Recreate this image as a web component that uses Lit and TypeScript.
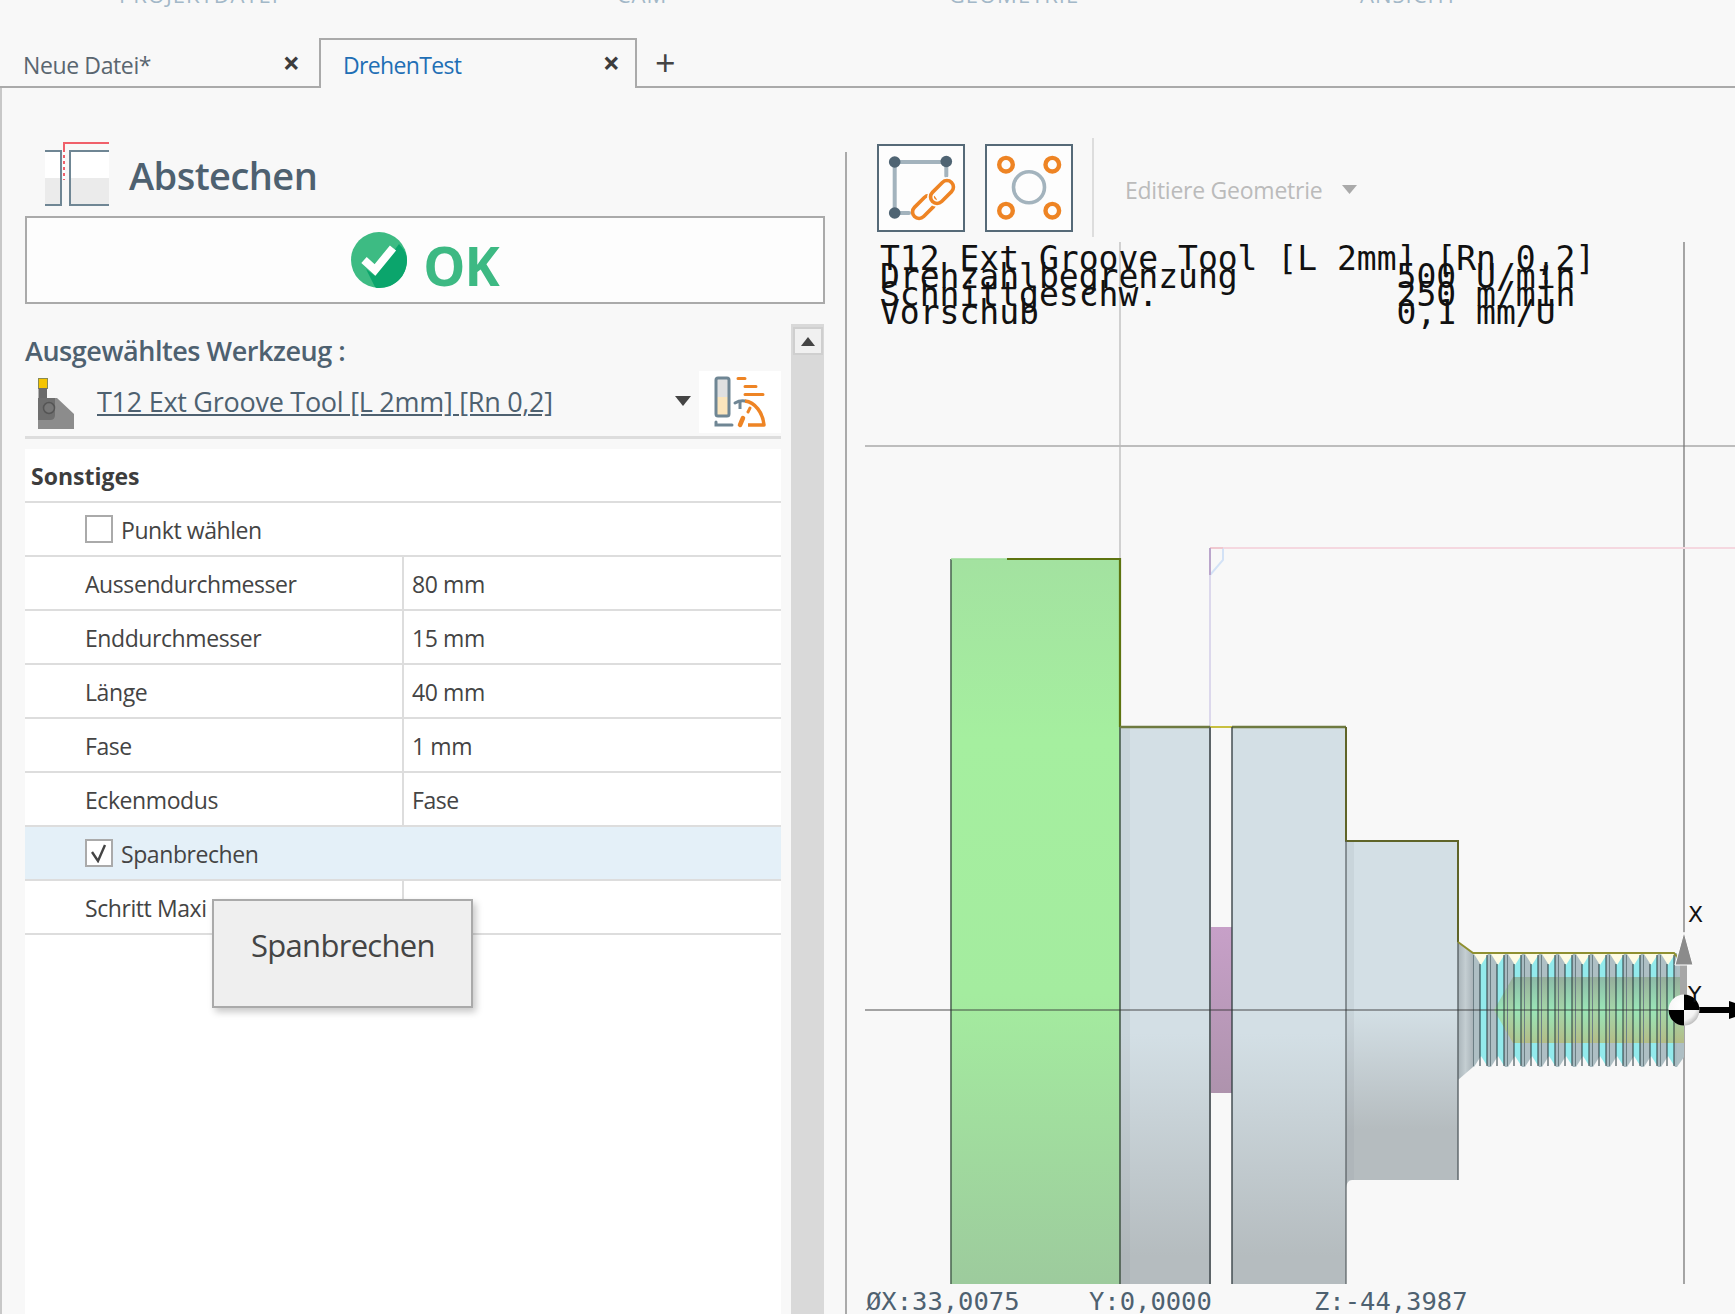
import { LitElement, html, css, svg } from "lit";
import { customElement } from "lit/decorators.js";

const rows = [
  { name: "Aussendurchmesser", value: "80 mm" },
  { name: "Enddurchmesser", value: "15 mm" },
  { name: "Länge", value: "40 mm" },
  { name: "Fase", value: "1 mm" },
  { name: "Eckenmodus", value: "Fase" },
];

const threadParts = () => {
  const out = [];
  for (let i = 0; i < 12; i++) {
    const x = 1473 + i * 17;
    out.push(svg`
      <rect x=${x} y="953" width="7" height="114" fill="#aebfc4"/>
      <rect x=${x + 7} y="953" width="7" height="114" fill="#93eaec"/>
      <rect x=${x + 14} y="953" width="3" height="114" fill="#a8bcc2"/>
      <path d="M${x + 1} 954 L${x + 8} 965 L${x + 15} 954 Z" fill="#fdfbe4"/>
      <path d="M${x + 1} 1067 L${x + 8} 1056 L${x + 15} 1067 Z" fill="#f8f8f8"/>
    `);
  }
  return out;
};

const threadLines = () => {
  const out = [];
  for (let i = 0; i < 12; i++) {
    const x = 1473 + i * 17;
    out.push(svg`
      <path d="M${x + 0.5} 955 V1066" stroke="#6b7e84" stroke-width="1"/>
      <path d="M${x + 7} 964 V1066" stroke="#1f3338" stroke-width="1"/>
      <path d="M${x + 14} 955 V1066" stroke="#26363a" stroke-width="1"/>
    `);
  }
  return out;
};

@customElement("app-root")
export class AppRoot extends LitElement {
  static styles = css`
    :host { display: block; width: 1735px; height: 1314px; overflow: hidden; background: #f8f8f8; font-family: "Open Sans", "Noto Sans", sans-serif; color: #444; }
    * { box-sizing: border-box; }
    .menu { height: 38px; overflow: hidden; display: grid; grid-template-columns: 398px 488px 256px 534px; }
    .menu span { text-align: center; font-size: 22px; line-height: 22px; margin-top: -17px; color: #a3b8c8; letter-spacing: 1px; }
    .tabs { height: 50px; display: flex; border-bottom: 2px solid #aaa; }
    .tab { width: 319px; height: 50px; display: flex; align-items: center; justify-content: space-between; padding: 4px 19px 0 23px; font-size: 23px; letter-spacing: -0.38px; color: #5a6670; }
    .tab.active { width: 318px; border: 2px solid #aaa; border-bottom: none; background: #f8f8f8; color: #1f6fb5; padding: 2px 15px 0 22px; letter-spacing: -0.65px; }
    .close { font-size: 30px; font-weight: 700; color: #3c3c3c; line-height: 1; margin-top: -4px; letter-spacing: 0; }
    .plus { font-size: 36px; line-height: 1; color: #444; margin: 0 0 0 18px; align-self: center; padding-top: 1px; font-weight: 400; }
    .main { display: flex; height: 1226px; }
    .left { width: 845px; border-left: 2px solid #c8c8c8; padding-left: 23px; overflow: hidden; display: flex; flex-direction: column; }
    .head { height: 128px; padding: 54px 0 0 20px; display: flex; align-items: flex-start; gap: 20px; }
    .title { font-size: 38px; font-weight: 600; letter-spacing: -0.55px; color: #4e6170; line-height: 44px; margin-top: 11px; }
    .ok { width: 800px; height: 88px; background: #fdfdfd; border: 2px solid #aaa; display: flex; align-items: center; justify-content: center; gap: 16px; }
    .ok-text { font-size: 53px; font-weight: 700; color: #3db983; line-height: 56px; margin-top: 11px; letter-spacing: -1px; }
    .ok svg { margin-top: -1px; }
    .body { flex: 1; min-height: 0; margin-top: 20px; display: flex; gap: 10px; width: 799px; }
    .content { width: 756px; display: flex; flex-direction: column; }
    .tool-label { height: 46px; font-size: 27px; font-weight: 600; letter-spacing: -0.45px; color: #4e6170; display: flex; align-items: center; padding-top: 6px; }
    .tool-row { height: 69px; border-bottom: 3px solid #ddd; display: flex; align-items: center; padding-bottom: 3px; }
    .tool-icon { margin-left: 13px; margin-top: 5px; }
    .tool-link { margin-left: 23px; font-size: 27px; letter-spacing: -0.27px; color: #4e6170; text-decoration: underline; flex: 1; }
    .drop { margin-right: 8px; margin-top: -2px; }
    .tool-btn { width: 82px; height: 62px; background: #fff; display: block; }
    .panel { position: relative; margin-top: 10px; background: #fff; flex: 1; }
    .row { height: 54px; border-bottom: 2px solid #ddd; display: flex; align-items: center; font-size: 23px; letter-spacing: -0.42px; color: #444; }
    .label { padding-top: 2px; }
    .row.group { font-weight: 700; color: #3d3d3d; padding-left: 6px; letter-spacing: 0; }
    .row.check { padding-left: 60px; }
    .row.sel { background: #e4f0f8; }
    .box { width: 28px; height: 28px; border: 2px solid #aaa; background: #fff; margin-right: 8px; display: flex; align-items: center; justify-content: center; }
    .name { width: 379px; height: 100%; border-right: 2px solid #ddd; padding-left: 60px; display: flex; align-items: center; white-space: nowrap; overflow: hidden; }
    .value { padding-left: 8px; }
    .tip { position: absolute; left: 187px; top: 450px; width: 261px; height: 109px; background: #efefef; border: 2px solid #aaa; box-shadow: 3px 4px 7px rgba(0,0,0,.22); font-size: 31px; letter-spacing: -0.7px; color: #444; padding: 23px 0 0 37px; }
    .scroll { width: 33px; background: #d9d9d9; padding: 3px 1px 0 2px; }
    .scroll-up { height: 28px; background: #f0f0f0; border: 2px solid #cfcfcf; display: flex; align-items: center; justify-content: center; }
    .divider { width: 2px; margin-top: 64px; background: #aaa; }
    .right { flex: 1; min-width: 0; display: flex; flex-direction: column; }
    .toolbar { height: 152px; padding: 56px 0 0 30px; display: flex; align-items: flex-start; }
    .tbtn { width: 88px; height: 88px; border: 2px solid #566a78; background: #fdfdfd; margin-right: 20px; display: block; }
    .sep { width: 2px; height: 99px; margin-top: -6px; background: #ddd; margin-left: -1px; }
    .edit { margin-left: 31px; display: flex; align-items: center; gap: 20px; font-size: 23px; letter-spacing: -0.25px; color: #bbb; height: 88px; padding-top: 3px; }
    .view { position: relative; flex: 1; min-height: 0; }
    .view svg { position: absolute; left: 0; top: 0; }
    .info { position: absolute; left: 33px; top: 10px; margin: 0; white-space: pre; font-family: "DejaVu Sans Mono", monospace; font-size: 33px; line-height: 18px; color: #111; }
    .status { height: 29px; display: flex; font-family: "DejaVu Sans Mono", monospace; font-size: 25.5px; line-height: 33px; color: #4e6170; padding-left: 19px; white-space: pre; }
    .status span:nth-child(1) { width: 223px; }
    .status span:nth-child(2) { width: 225px; }
  `;

  render() {
    return html`
      <div class="menu"><span>PROJEKTDATEI</span><span>CAM</span><span>GEOMETRIE</span><span>ANSICHT</span></div>
      <div class="tabs">
        <div class="tab"><span>Neue Datei*</span><span class="close">×</span></div>
        <div class="tab active"><span>DrehenTest</span><span class="close">×</span></div>
        <div class="plus">+</div>
      </div>
      <div class="main">
        <div class="left">
          <div class="head">
            ${this.headIcon()}
            <div class="title">Abstechen</div>
          </div>
          <div class="ok">${this.checkIcon()}<span class="ok-text">OK</span></div>
          <div class="body">
            <div class="content">
              <div class="tool-label">Ausgewähltes Werkzeug :</div>
              <div class="tool-row">
                ${this.toolIcon()}
                <span class="tool-link">T12 Ext Groove Tool [L 2mm] [Rn 0,2]</span>
                <svg class="drop" width="16" height="10" viewBox="0 0 16 10"><path d="M0 0H16L8 10Z" fill="#444"/></svg>
                ${this.toolBtn()}
              </div>
              <div class="panel">
                <div class="row group"><span class="label">Sonstiges</span></div>
                <div class="row check"><span class="box"></span><span class="label">Punkt wählen</span></div>
                ${rows.map((r) => html`<div class="row"><div class="name"><span class="label">${r.name}</span></div><div class="value label">${r.value}</div></div>`)}
                <div class="row check sel"><span class="box"><svg width="20" height="20" viewBox="0 0 20 20"><path d="M3 9L9 18L16 2" fill="none" stroke="#444" stroke-width="2.4"/></svg></span><span class="label">Spanbrechen</span></div>
                <div class="row"><div class="name"><span class="label">Schritt Maxi</span></div><div class="value"></div></div>
                <div class="tip">Spanbrechen</div>
              </div>
            </div>
            <div class="scroll"><div class="scroll-up"><svg width="14" height="9" viewBox="0 0 14 9"><path d="M7 0L14 9H0Z" fill="#444"/></svg></div></div>
          </div>
        </div>
        <div class="divider"></div>
        <div class="right">
          <div class="toolbar">
            ${this.linkBtn()}
            ${this.circleBtn()}
            <div class="sep"></div>
            <div class="edit">Editiere Geometrie <svg width="15" height="9" viewBox="0 0 15 9"><path d="M0 0H15L7.5 9Z" fill="#aaa"/></svg></div>
          </div>
          <div class="view">
            ${this.canvas()}
            <pre class="info">T12 Ext Groove Tool [L 2mm] [Rn 0,2]
Drehzahlbegrenzung        500 U/min
Schnittgeschw.            250 m/min
Vorschub                  0,1 mm/U</pre>
          </div>
          <div class="status"><span>ØX:33,0075</span><span>Y:0,0000</span><span>Z:-44,3987</span></div>
        </div>
      </div>
    `;
  }

  headIcon() {
    return html`<svg width="64" height="64" viewBox="45 142 64 64" style="flex:none">
      <rect x="45" y="151" width="16" height="27" fill="#fff"/><rect x="45" y="178" width="16" height="27" fill="#ebebeb"/>
      <rect x="70" y="151" width="39" height="27" fill="#fff"/><rect x="70" y="178" width="39" height="27" fill="#ebebeb"/>
      <path d="M45 151H61V205H45M109 151H70V205H109" fill="none" stroke="#6f8694" stroke-width="2"/>
      <path d="M64 180V143H109" fill="none" stroke="#f0606a" stroke-width="2"/>
      <path d="M64 152V181" stroke="#fff" stroke-width="2" stroke-dasharray="3 3"/>
    </svg>`;
  }

  checkIcon() {
    return html`<svg width="56" height="56" viewBox="0 0 56 56" style="flex:none">
      <circle cx="28" cy="28" r="28" fill="#3dbb83"/>
      <path d="M24 44L48 12C53 17 56 22 56 28C56 44 44 56 28 56C26 56 25 56 24 55L15 37Z" fill="#0ba56c"/>
      <path d="M13 28L24 38L42 16" fill="none" stroke="#fff" stroke-width="8" stroke-linejoin="miter"/>
    </svg>`;
  }

  toolIcon() {
    return html`<svg class="tool-icon" width="36" height="52" viewBox="39 377 36 52" style="flex:none">
      <rect x="39.5" y="377.5" width="9" height="10" fill="#f5c400" stroke="#8a8a50"/>
      <rect x="39.5" y="387" width="8.5" height="12" fill="#6a6a6a"/>
      <path d="M39 397H58L75 413V428H39Z" fill="#8c8c8c"/>
      <path d="M39 397H56V414Q56 419 51 419H39Z" fill="#6e6e6e"/>
      <circle cx="50" cy="407" r="5.5" fill="#777" stroke="#555" stroke-width="1.5"/>
    </svg>`;
  }

  toolBtn() {
    return html`<svg class="tool-btn" viewBox="0 0 82 62">
      <rect x="17" y="7" width="13" height="38" rx="2" fill="#e0e0e0"/>
      <rect x="17" y="26" width="13" height="19" fill="#fbe5bc"/>
      <rect x="17" y="7" width="13" height="38" rx="2" fill="none" stroke="#6f8694" stroke-width="3"/>
      <path d="M39 7.5H46M46 15.5H57M46 23.5H64" stroke="#ee8424" stroke-width="3" stroke-linecap="round"/>
      <path d="M36 32Q41 29 46 30" fill="none" stroke="#6f8694" stroke-width="3" stroke-linecap="round"/>
      <path d="M41 31V38" stroke="#6f8694" stroke-width="3"/>
      <path d="M46 30C56 31 64 42 65 54H49" fill="none" stroke="#ee8424" stroke-width="3.5" stroke-linejoin="round"/>
      <path d="M41 54L44 47" stroke="#ee8424" stroke-width="4.5" stroke-linecap="round"/>
      <path d="M49 41L51 37" stroke="#ee8424" stroke-width="3" stroke-linecap="round"/>
      <path d="M17 51V54H33" fill="none" stroke="#6f8694" stroke-width="3" stroke-linecap="round"/>
    </svg>`;
  }

  linkBtn() {
    return html`<svg class="tbtn" viewBox="0 0 84 84">
      <path d="M15.7 16H67.3M15.7 16V67M67.3 16V30M15.7 67H30" fill="none" stroke="#a3b3bd" stroke-width="4" stroke-linecap="round"/>
      <circle cx="15.7" cy="16" r="5.8" fill="#4f6473"/><circle cx="67.3" cy="15.5" r="5.8" fill="#4f6473"/><circle cx="15.7" cy="67" r="5.8" fill="#4f6473"/>
      <g fill="none" stroke-width="3.6">
        <rect x="31.5" y="54.5" width="27" height="13" rx="6.5" transform="rotate(-45 45 61)" stroke="#ee8424"/>
        <rect x="49.5" y="39.5" width="27" height="13" rx="6.5" transform="rotate(-45 63 46)" stroke="#fdfdfd" stroke-width="7"/>
        <rect x="49.5" y="39.5" width="27" height="13" rx="6.5" transform="rotate(-45 63 46)" stroke="#ee8424"/>
      </g>
    </svg>`;
  }

  circleBtn() {
    return html`<svg class="tbtn" viewBox="0 0 84 84">
      <g fill="none" stroke="#ee8424" stroke-width="4.4">
        <circle cx="19" cy="18.7" r="6.8"/><circle cx="65.3" cy="18.7" r="6.8"/><circle cx="19" cy="64.7" r="6.8"/><circle cx="65.3" cy="64.7" r="6.8"/>
      </g>
      <circle cx="42" cy="41.3" r="15.5" fill="none" stroke="#a3b3bd" stroke-width="3.6"/>
    </svg>`;
  }

  canvas() {
    return svg`<svg width="888" height="1045" viewBox="847 240 888 1045" xmlns="http://www.w3.org/2000/svg">
      <defs>
        <linearGradient id="g" gradientUnits="userSpaceOnUse" x1="0" y1="559" x2="0" y2="1284">
          <stop offset="0" stop-color="#a3e2a0"/><stop offset=".25" stop-color="#a5ef9f"/><stop offset=".6" stop-color="#a4ec9f"/><stop offset="1" stop-color="#9dcb9d"/>
        </linearGradient>
        <linearGradient id="s" gradientUnits="userSpaceOnUse" x1="0" y1="727" x2="0" y2="1284">
          <stop offset="0" stop-color="#d3dfe5"/><stop offset=".55" stop-color="#d3dfe5"/><stop offset=".95" stop-color="#b5bcbf"/>
        </linearGradient>
        <linearGradient id="s4" gradientUnits="userSpaceOnUse" x1="0" y1="841" x2="0" y2="1180">
          <stop offset="0" stop-color="#d3dfe5"/><stop offset=".5" stop-color="#d3dfe5"/><stop offset=".85" stop-color="#b5bcbf"/>
        </linearGradient>
        <linearGradient id="p" gradientUnits="userSpaceOnUse" x1="0" y1="927" x2="0" y2="1093">
          <stop offset="0" stop-color="#c7a0c8"/><stop offset="1" stop-color="#ae93ad"/>
        </linearGradient>
        <linearGradient id="core" gradientUnits="userSpaceOnUse" x1="0" y1="977" x2="0" y2="1043">
          <stop offset="0" stop-color="#8aa58a" stop-opacity=".7"/><stop offset=".5" stop-color="#9fe29a" stop-opacity=".65"/><stop offset="1" stop-color="#b6bb6c" stop-opacity=".7"/>
        </linearGradient>
        <linearGradient id="cham" x1="0" y1="0" x2="1" y2="0">
          <stop offset="0" stop-color="#a9b4b9"/><stop offset=".5" stop-color="#c4ced2"/><stop offset="1" stop-color="#a9b4b9"/>
        </linearGradient>
        <radialGradient id="ball" cx=".4" cy=".35" r=".75"><stop offset="0" stop-color="#fff"/><stop offset=".65" stop-color="#f4f4f4"/><stop offset="1" stop-color="#a8a8a8"/></radialGradient>
      </defs>

      <path d="M865 446H1735" stroke="#aaa" stroke-width="1.3"/>
      <path d="M1120 242V560" stroke="#bbb" stroke-width="1.3"/>
      <path d="M1684 242V1284" stroke="#777" stroke-width="1.3"/>

      <path d="M1210 548H1735" stroke="#f5d8e0" stroke-width="2"/>
      <path d="M1210 548V727" stroke="#dcd8ec" stroke-width="2"/>
      <path d="M1223 548V560L1210 575" fill="none" stroke="#d3e2f6" stroke-width="2"/>
      <path d="M1210 548H1223" stroke="#f0c8d0" stroke-width="2"/>
      <path d="M1210 548V575" stroke="#bba6cc" stroke-width="2"/>

      <rect x="951" y="559" width="169" height="725" fill="url(#g)"/>
      <path d="M1120 727H1210V1284H1120Z" fill="url(#s)"/>
      <rect x="1121" y="727" width="9" height="557" fill="#8a9499" opacity=".13"/>
      <path d="M1232 727H1346V1284H1232Z" fill="url(#s)"/>
      <rect x="1210" y="927" width="22" height="166" fill="url(#p)"/>
      <path d="M1346 841H1458V1180H1352Q1347 1180 1346 1188Z" fill="url(#s4)"/>
      <rect x="1346" y="841" width="8" height="339" fill="#8a9499" opacity=".13"/>
      <path d="M1458 942L1473 953V1067L1458 1080Z" fill="url(#cham)"/>

      ${threadParts()}
      <path d="M1677 954L1684 965V1057L1677 1067Z" fill="#aebfc4"/>
      <path d="M1494 1010L1513 977H1684V1043H1513Z" fill="url(#core)"/>
      ${threadLines()}

      <path d="M951 559V1284" stroke="#4f6a55" stroke-width="1.6"/>
      <path d="M951 559H1007" stroke="#9cdc98" stroke-width="1.4"/>
      <path d="M1007 559H1120V727" fill="none" stroke="#5d7410" stroke-width="2.2"/>
      <path d="M1120 727V1284" stroke="#46594a" stroke-width="1.6"/>
      <path d="M1120 727H1210" stroke="#6e7a40" stroke-width="2.4"/>
      <path d="M1210 727H1232" stroke="#c8c040" stroke-width="2"/>
      <path d="M1232 727H1346" stroke="#6e7a40" stroke-width="2.4"/>
      <path d="M1210 727V1284" stroke="#5c6468" stroke-width="2"/>
      <path d="M1232 727V1284" stroke="#3a4448" stroke-width="1.4"/>
      <path d="M1346 727V841H1458V942" fill="none" stroke="#5f6428" stroke-width="2"/>
      <path d="M1346 841V1284" stroke="#555d60" stroke-width="1.2"/>
      <path d="M1458 942V1180" stroke="#596266" stroke-width="1.4"/>
      <path d="M1458 942L1473 953H1674L1684 965" fill="none" stroke="#8f9030" stroke-width="2"/>

      <path d="M865 1010H1684" stroke="#333" stroke-width="1" opacity=".85"/>

      <rect x="1680" y="965" width="7" height="36" fill="#a6a6a6"/>
      <path d="M1684 932L1693 965H1675Z" fill="#8b8b8b" stroke="#fff" stroke-width="1"/>
      <path d="M1699 1010H1729" stroke="#000" stroke-width="6"/>
      <path d="M1729 1001L1735 1003V1017L1729 1019Z" fill="#000"/>
      <circle cx="1684" cy="1010" r="15.5" fill="url(#ball)"/>
      <path d="M1684 1010V994.5A15.5 15.5 0 0 1 1699.5 1010Z M1684 1010V1025.5A15.5 15.5 0 0 1 1668.5 1010Z" fill="#000"/>

      <text x="1688" y="922" font-family="DejaVu Sans, sans-serif" font-size="22" fill="#111">X</text>
      <text x="1688" y="1002" font-family="DejaVu Sans, sans-serif" font-size="22" fill="#111">Y</text>
    </svg>`;
  }
}
